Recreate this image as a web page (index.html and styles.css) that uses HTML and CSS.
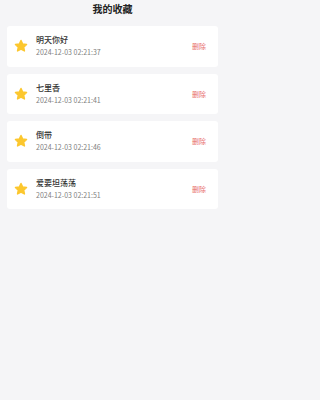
FILE: index.html
```html
<!DOCTYPE html>
<html lang="zh">
<head>
<meta charset="utf-8">
<title>我的收藏</title>
<link rel="stylesheet" href="styles.css">
</head>
<body>
<div class="page">
<header class="topbar">我的收藏</header>
<main class="list">
  <div class="card">
    <svg class="star" viewBox="0 0 24 24"><polygon points="12,2.5 14.9,8.6 21.5,9.4 16.6,13.9 17.9,20.5 12,17.2 6.1,20.5 7.4,13.9 2.5,9.4 9.1,8.6"/></svg>
    <div class="info">
      <div class="name">明天你好</div>
      <div class="time">2024-12-03 02:21:37</div>
    </div>
    <span class="del">删除</span>
  </div>
  <div class="card">
    <svg class="star" viewBox="0 0 24 24"><polygon points="12,2.5 14.9,8.6 21.5,9.4 16.6,13.9 17.9,20.5 12,17.2 6.1,20.5 7.4,13.9 2.5,9.4 9.1,8.6"/></svg>
    <div class="info">
      <div class="name">七里香</div>
      <div class="time">2024-12-03 02:21:41</div>
    </div>
    <span class="del">删除</span>
  </div>
  <div class="card">
    <svg class="star" viewBox="0 0 24 24"><polygon points="12,2.5 14.9,8.6 21.5,9.4 16.6,13.9 17.9,20.5 12,17.2 6.1,20.5 7.4,13.9 2.5,9.4 9.1,8.6"/></svg>
    <div class="info">
      <div class="name">倒带</div>
      <div class="time">2024-12-03 02:21:46</div>
    </div>
    <span class="del">删除</span>
  </div>
  <div class="card">
    <svg class="star" viewBox="0 0 24 24"><polygon points="12,2.5 14.9,8.6 21.5,9.4 16.6,13.9 17.9,20.5 12,17.2 6.1,20.5 7.4,13.9 2.5,9.4 9.1,8.6"/></svg>
    <div class="info">
      <div class="name">爱要坦荡荡</div>
      <div class="time">2024-12-03 02:21:51</div>
    </div>
    <span class="del">删除</span>
  </div>
</main>
</div>
</body>
</html>
```

FILE: styles.css
```css
html, body {
  margin: 0;
  padding: 0;
}
body {
  background: #f5f5f7;
  font-family: "Noto Sans CJK SC", "Noto Sans", sans-serif;
  color: #333;
  min-height: 400px;
}
.page {
  max-width: 225px;
}
.topbar {
  height: 18px;
  line-height: 18px;
  text-align: center;
  font-size: 10px;
  font-weight: 600;
  color: #222;
}
.list {
  display: flex;
  flex-direction: column;
  gap: 7px;
  padding: 8px 7px;
}
.card {
  height: 40.5px;
  background: #fff;
  border-radius: 3px;
  display: flex;
  align-items: center;
  padding: 0 12px 0 7px;
}
.star {
  width: 14px;
  height: 14px;
  flex: none;
}
.star polygon {
  fill: #fcc72e;
  stroke: #fcc72e;
  stroke-width: 2.5;
  stroke-linejoin: round;
}
.info {
  flex: 1;
  margin-left: 8px;
  display: flex;
  flex-direction: column;
  gap: 2px;
}
.name {
  font-size: 8px;
  line-height: 11px;
  color: #333;
  font-weight: 500;
}
.time {
  font-size: 7px;
  line-height: 11px;
  color: #808080;
}
.del {
  font-size: 7px;
  color: #e86c6c;
}
```
